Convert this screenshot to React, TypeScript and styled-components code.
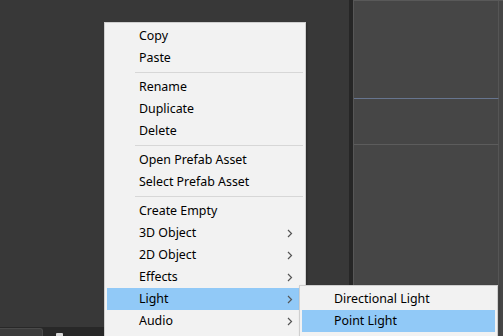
import React from 'react'
import styled, { createGlobalStyle } from 'styled-components'

const Global = createGlobalStyle`
  html, body { margin: 0; padding: 0; background: #383838; }
  body { font-family: "Noto Sans", "Liberation Sans", sans-serif; }
`

const Screen = styled.div`
  position: relative;
  width: 503px;
  height: 336px;
  overflow: hidden;
  display: flex;
  background: #383838;
`

const LeftPane = styled.div`
  width: 349px;
  display: flex;
  flex-direction: column;
`

const LeftArea = styled.div`
  flex: 1;
  background: #383838;
`

const BottomBar = styled.div`
  height: 9px;
  background: #282828;
  display: flex;
  align-items: flex-end;
  gap: 13px;
`

const BottomTab = styled.div`
  width: 42px;
  height: 7px;
  background: #3c3c3c;
  border-top: 1px solid #4a4a4a;
  border-right: 1px solid #4a4a4a;
  border-top-right-radius: 3px;
`

const TinyBox = styled.div`
  width: 7px;
  height: 3px;
  background: #d8d8d8;
  border-radius: 1px 1px 0 0;
`

const Divider = styled.div`
  width: 4px;
  background: #262626;
`

const Scene = styled.div`
  flex: 1;
  display: flex;
  flex-direction: column;
  background: #464646;
  border-left: 1px solid #575757;
  border-top: 1px solid #595959;
`

const SceneBlock = styled.div<{ h: number; line: string }>`
  height: ${({ h }) => h}px;
  border-bottom: 1px solid ${({ line }) => line};
  margin-right: 4px;
  border-right: 1px solid #555;
`

const SceneRest = styled.div`
  flex: 1;
  margin-right: 4px;
  border-right: 1px solid #555;
`

const Menu = styled.div<{ left: number; top: number; width: number }>`
  position: absolute;
  left: ${({ left }) => left}px;
  top: ${({ top }) => top}px;
  width: ${({ width }) => width}px;
  box-sizing: border-box;
  background: #f2f2f2;
  border: 1px solid #cfcfcf;
  padding: 2px 2px 4px 2px;
  font-size: 12.4px;
  color: #000;
  box-shadow: 1px 1px 2px rgba(0, 0, 0, 0.25);
`

const Item = styled.div<{ active?: boolean }>`
  position: relative;
  height: 22px;
  box-sizing: border-box;
  display: flex;
  align-items: center;
  padding-left: 32px;
  padding-bottom: 2px;
  background: ${({ active }) => (active ? '#91c9f7' : 'transparent')};
  white-space: nowrap;
`

const Arrow = styled.svg`
  position: absolute;
  right: 10px;
  top: 7px;
`

const Separator = styled.div`
  height: 1px;
  margin: 3px 0 3px 28px;
  background: #d7d7d7;
`

const SubMenuWrap = styled(Menu)`
  z-index: 2;
`

const Chevron = () => (
  <Arrow width="6" height="9" viewBox="0 0 6 9">
    <path d="M1 1 L4.5 4.5 L1 8" fill="none" stroke="#555" strokeWidth="1.2" />
  </Arrow>
)

type Entry = { label: string; sub?: boolean; active?: boolean } | 'sep'

const ENTRIES: Entry[] = [
  { label: 'Copy' },
  { label: 'Paste' },
  'sep',
  { label: 'Rename' },
  { label: 'Duplicate' },
  { label: 'Delete' },
  'sep',
  { label: 'Open Prefab Asset' },
  { label: 'Select Prefab Asset' },
  'sep',
  { label: 'Create Empty' },
  { label: '3D Object', sub: true },
  { label: '2D Object', sub: true },
  { label: 'Effects', sub: true },
  { label: 'Light', sub: true, active: true },
  { label: 'Audio', sub: true },
]

export default function App() {
  return (
    <>
      <Global />
      <Screen>
        <LeftPane>
          <LeftArea />
          <BottomBar>
            <BottomTab />
            <TinyBox />
          </BottomBar>
        </LeftPane>
        <Divider />
        <Scene>
          <SceneBlock h={97} line="#67758f" />
          <SceneBlock h={45} line="#5c5c5c" />
          <SceneRest />
        </Scene>

        <Menu left={104} top={22} width={202}>
          {ENTRIES.map((e, i) =>
            e === 'sep' ? (
              <Separator key={i} />
            ) : (
              <Item key={i} active={e.active}>
                {e.label}
                {e.sub && <Chevron />}
              </Item>
            )
          )}
        </Menu>

        <SubMenuWrap left={299} top={285} width={199}>
          <Item>Directional Light</Item>
          <Item active>Point Light</Item>
        </SubMenuWrap>
      </Screen>
    </>
  )
}
